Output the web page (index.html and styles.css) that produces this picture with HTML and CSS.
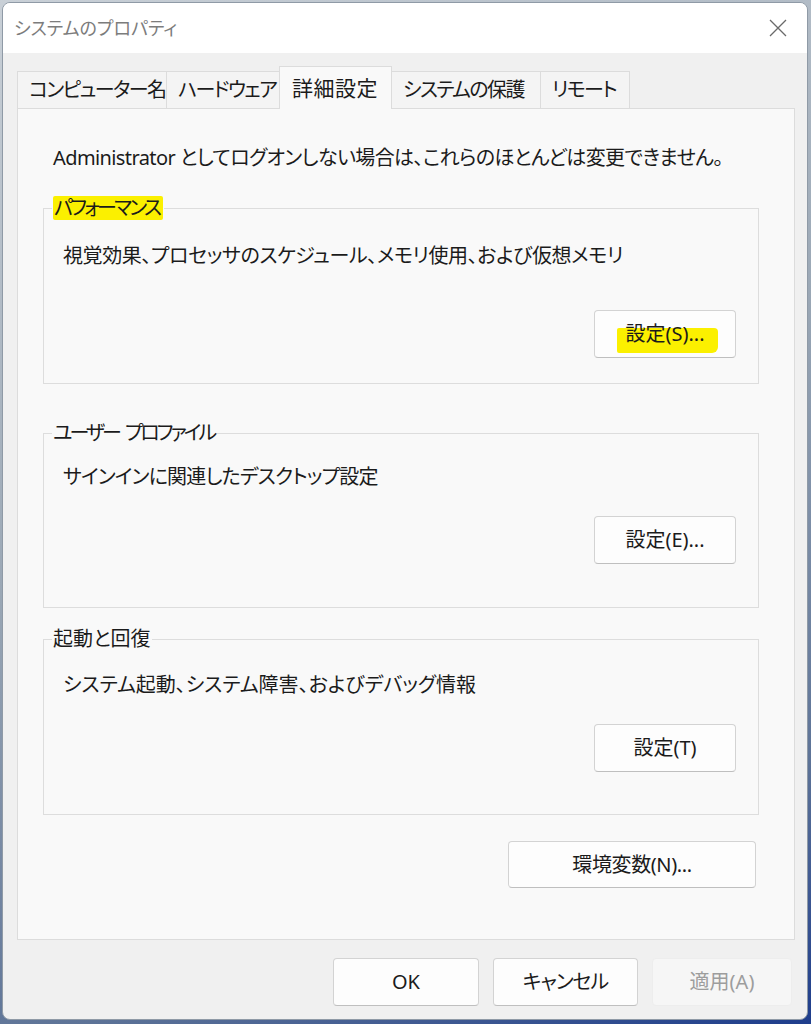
FILE: index.html
```html
<!DOCTYPE html>
<html lang="ja">
<head>
<meta charset="utf-8">
<title>システムのプロパティ</title>
<link rel="stylesheet" href="styles.css">
</head>
<body>
<div class="window">
  <div class="titlebar">
    <span class="title">システムのプロパティ</span>
    <span class="close"><svg width="18" height="18" viewBox="0 0 18 18"><path d="M1 1L17 17M17 1L1 17" stroke="#6a6a6a" stroke-width="1.3" fill="none"/></svg></span>
  </div>
  <div class="client">
    <div class="tabs">
      <div class="tab tab-w1">コンピューター名</div>
      <div class="tab tab-w2">ハードウェア</div>
      <div class="tab tab-w3 tab-active">詳細設定</div>
      <div class="tab tab-w1">システムの保護</div>
      <div class="tab tab-w5">リモート</div>
    </div>
    <div class="panel">
      <p class="intro">Administrator としてログオンしない場合は、これらのほとんどは変更できません。</p>

      <div class="group group-perf">
        <div class="legend legend-kana"><span class="marker">パフォーマンス</span></div>
        <p class="desc">視覚効果、プロセッサのスケジュール、メモリ使用、および仮想メモリ</p>
        <div class="btn-row"><button class="btn btn-group"><span class="hl">設定(S)...</span></button></div>
      </div>

      <div class="group group-profile">
        <div class="legend legend-kana legend-spaced">ユーザー プロファイル</div>
        <p class="desc">サインインに関連したデスクトップ設定</p>
        <div class="btn-row"><button class="btn btn-group">設定(E)...</button></div>
      </div>

      <div class="group group-startup">
        <div class="legend">起動と回復</div>
        <p class="desc">システム起動、システム障害、およびデバッグ情報</p>
        <div class="btn-row"><button class="btn btn-group">設定(T)</button></div>
      </div>

      <div class="env-row"><button class="btn btn-env">環境変数(N)...</button></div>
    </div>
    <div class="footer">
      <button class="btn btn-ok">OK</button>
      <button class="btn btn-cancel">キャンセル</button>
      <button class="btn btn-apply" disabled>適用(A)</button>
    </div>
  </div>
</div>
</body>
</html>
```

FILE: styles.css
```css
* { box-sizing: border-box; }

html, body {
  margin: 0;
  padding: 0;
}

body {
  width: 811px;
  height: 1024px;
  overflow: hidden;
  background: linear-gradient(160deg, #c9d0d7 0%, #9aa7b5 45%, #5d7397 80%, #1e3d8c 100%);
  font-family: "Noto Sans", "Noto Sans CJK JP", sans-serif;
  font-feature-settings: "palt";
  color: #1b1b1b;
}

.window {
  margin: 2px;
  width: 806px;
  height: 1018px;
  border: 1px solid #8f9aa6;
  border-radius: 8px;
  overflow: hidden;
  background: #f0f0f0;
  display: flex;
  flex-direction: column;
}

.titlebar {
  height: 50px;
  background: #ffffff;
  display: flex;
  align-items: center;
  justify-content: space-between;
  padding: 0 20px 0 11px;
  flex: none;
}

.title {
  font-size: 18px;
  color: #7c7c7c;
  line-height: 24px;
}

.close {
  display: flex;
  width: 18px;
  height: 18px;
}

.client {
  padding: 14px 12px 0 14px;
}

.tabs {
  display: flex;
  align-items: flex-end;
  height: 41px;
}

.tab {
  height: 37px;
  border: 1px solid #dcdcdc;
  border-bottom: none;
  background: #f4f4f4;
  margin-right: -1px;
  padding-left: 11px;
  font-size: 20px;
  letter-spacing: -1.6px;
  line-height: 35px;
  white-space: nowrap;
}

.tab-w1 { width: 150px; }
.tab-w2 { width: 114px; }
.tab-w3 { width: 113px; }
.tab-w5 { width: 90px; }

.tab-active {
  position: relative;
  z-index: 1;
  height: 43px;
  margin-bottom: -1px;
  background: #f9f9f9;
  padding-left: 12px;
  font-size: 21px;
  letter-spacing: 0.5px;
  line-height: 42px;
}

.panel {
  height: 832px;
  border: 1px solid #dcdcdc;
  background: #f9f9f9;
  padding: 37px 35px 0 25px;
}

.intro {
  margin: 0;
  padding-left: 10px;
  font-size: 20px;
  line-height: 24px;
  letter-spacing: -0.6px;
}

.group {
  border: 1px solid #dddddd;
  font-size: 20px;
  line-height: 24px;
}

.legend {
  width: fit-content;
  margin: -13px 0 0 8px;
  padding: 0 1px;
  background: #f9f9f9;
  line-height: 24px;
}

.legend-kana {
  letter-spacing: -2.7px;
}

.legend-spaced {
  letter-spacing: -3px;
  word-spacing: 4px;
}

.marker {
  display: inline-block;
  background: #fbf000;
  padding: 0 4px 0 1px;
  border-radius: 2px;
}

.desc {
  margin: 0;
  padding-left: 19px;
  line-height: 24px;
}

.btn-row {
  display: flex;
  justify-content: flex-end;
  padding-right: 22px;
}

.group-perf { margin-top: 38px; padding-bottom: 25px; }
.group-perf .desc { margin-top: 24px; letter-spacing: -0.4px; }
.group-perf .btn-row { margin-top: 42px; }

.group-profile { margin-top: 49px; padding-bottom: 43px; }
.group-profile .desc { margin-top: 20px; letter-spacing: -0.8px; }
.group-profile .btn-row { margin-top: 27px; }

.group-startup { margin-top: 31px; padding-bottom: 42px; }
.group-startup .desc { margin-top: 22px; }
.group-startup .btn-row { margin-top: 27px; }

.btn {
  font-family: "Noto Sans", "Noto Sans CJK JP", sans-serif;
  font-feature-settings: "palt";
  font-size: 20px;
  color: #1b1b1b;
  background: #fdfdfd;
  border: 1px solid #d3d3d3;
  border-bottom-color: #bfbfbf;
  border-radius: 4px;
  padding: 0;
  height: 48px;
  line-height: 24px;
}

.btn-group { width: 142px; }

.hl {
  position: relative;
  z-index: 0;
}

.hl::before {
  content: "";
  position: absolute;
  left: -8px;
  right: -13px;
  top: 8px;
  bottom: -6px;
  background: #fbf000;
  border-radius: 2px 4px 6px 2px;
  z-index: -1;
}

.env-row {
  display: flex;
  justify-content: flex-end;
  padding-right: 3px;
  margin-top: 26px;
}

.btn-env {
  width: 248px;
  height: 47px;
  letter-spacing: -0.4px;
}

.footer {
  display: flex;
  justify-content: flex-end;
  gap: 14px;
  padding: 18px 3px 0 0;
}

.btn-ok { width: 146px; }
.btn-cancel { width: 145px; letter-spacing: -1px; }

.btn-apply {
  width: 140px;
  background: #f6f6f6;
  border-color: #ededed;
  color: #9d9d9d;
}
```
